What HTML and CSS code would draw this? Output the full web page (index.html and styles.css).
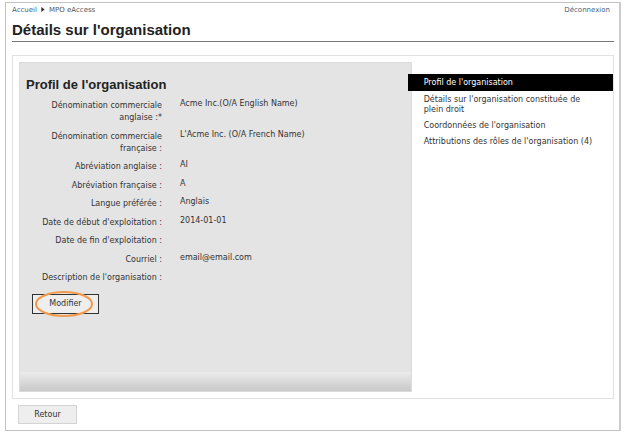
FILE: index.html
```html
<!DOCTYPE html>
<html lang="fr">
<head>
<meta charset="utf-8">
<meta name="viewport" content="width=device-width, initial-scale=1">
<title>Détails sur l'organisation</title>
<link rel="stylesheet" href="styles.css">
</head>
<body>
<div class="page">
  <header class="topbar">
    <nav class="breadcrumb" aria-label="Fil d'Ariane"><a href="#">Accueil</a><svg class="arrow" viewBox="0 0 4 6" aria-hidden="true"><path d="M0 0 4 3 0 6Z"/></svg><span>MPO eAccess</span></nav>
    <a href="#">Déconnexion</a>
  </header>
  <h1>Détails sur l'organisation</h1>
  <main class="box">
    <section class="panel">
      <h2>Profil de l'organisation</h2>
      <dl class="fields">
        <dt>Dénomination commerciale anglaise :*</dt><dd>Acme Inc.(O/A English Name)</dd>
        <dt>Dénomination commerciale française :</dt><dd>L'Acme Inc. (O/A French Name)</dd>
        <dt>Abréviation anglaise :</dt><dd>AI</dd>
        <dt>Abréviation française :</dt><dd>A</dd>
        <dt>Langue préférée :</dt><dd>Anglais</dd>
        <dt>Date de début d'exploitation :</dt><dd>2014-01-01</dd>
        <dt>Date de fin d'exploitation :</dt><dd></dd>
        <dt>Courriel :</dt><dd>email@email.com</dd>
        <dt>Description de l'organisation :</dt><dd></dd>
      </dl>
      <div class="edit">
        <button type="button" class="btn btn-edit">Modifier</button>
        <svg class="ring" viewBox="0 0 58 26" aria-hidden="true"><ellipse cx="29" cy="13" rx="28" ry="12"/></svg>
      </div>
      <div class="panel-foot"></div>
    </section>
    <nav class="side" aria-label="Sections">
      <a class="active" href="#" aria-current="page">Profil de l'organisation</a>
      <a href="#">Détails sur l'organisation constituée de plein droit</a>
      <a href="#">Coordonnées de l'organisation</a>
      <a href="#">Attributions des rôles de l'organisation (4)</a>
    </nav>
  </main>
  <button type="button" class="btn btn-back">Retour</button>
</div>
</body>
</html>
```
FILE: styles.css
```css
* {
  box-sizing: border-box;
}

body {
  margin: 0;
  padding: 2px 3px 4px 5px;
  background: #fff;
  color: #333;
  font: 8px/12px "DejaVu Sans", sans-serif;
}

a {
  color: #3f5f80;
  text-decoration: none;
}

.page {
  padding: 2px 5px 6px 6px;
  border: 1px solid #c3c3c3;
  border-right: 2px solid #c9cdd0;
}

.topbar {
  display: flex;
  justify-content: space-between;
  padding-right: 4px;
  color: #555;
  font-size: 7px;
  line-height: 11px;
}

.arrow {
  width: 4px;
  height: 5px;
  margin: 0 4px;
  fill: #333;
}

h1,
h2 {
  margin: 0;
  color: #222;
  font-family: "Liberation Sans", sans-serif;
  font-weight: bold;
}

h1 {
  padding: 5px 0 2px;
  border-bottom: 1px solid #777;
  font-size: 15px;
  line-height: 18px;
}

.box {
  display: flex;
  margin-top: 13px;
  padding: 6px 0 6px 6px;
  border: 1px solid #e2e2e2;
}

.panel {
  flex: 392 1 0;
  padding-top: 13px;
  border: 1px solid #dcdcdc;
  background: #e4e4e4;
}

h2 {
  padding-left: 6px;
  font-size: 13px;
  line-height: 18px;
}

.fields {
  display: grid;
  grid-template-columns: 136px 1fr;
  column-gap: 18px;
  align-content: space-between;
  min-height: 186px;
  margin: 4px 0 0 6px;
}

.fields dt {
  padding: 2px 0 0 8px;
  text-align: right;
}

.fields dd {
  margin: 0;
}

.edit {
  position: relative;
  margin: 10px 0 0 12px;
}

.btn {
  display: block;
  padding: 0;
  background: #eee;
  color: #333;
  font: inherit;
}

.btn-edit {
  width: 67px;
  height: 20px;
  border: 1px solid #333;
}

.ring {
  position: absolute;
  top: -3px;
  left: 3px;
  width: 58px;
  height: 26px;
  fill: none;
  stroke: #f5994a;
  stroke-width: 2;
  pointer-events: none;
}

.panel-foot {
  height: 19px;
  margin-top: 58px;
  background: linear-gradient(#ebebeb, #c9c9c9);
}

.side {
  flex: 202 1 0;
  display: flex;
  flex-direction: column;
  gap: 6px;
  margin: 12px 0 0;
  line-height: 10px;
}

.side a {
  padding: 0 16px 0 12px;
  color: #333;
}

.side .active {
  padding: 4px 8px 3px 16px;
  margin: 0 0 -2px -4px;
  background: #000;
  color: #fff;
}

.btn-back {
  width: 59px;
  height: 19px;
  margin: 6px 0 0 6px;
  border: 1px solid #d4d4d4;
}
```
